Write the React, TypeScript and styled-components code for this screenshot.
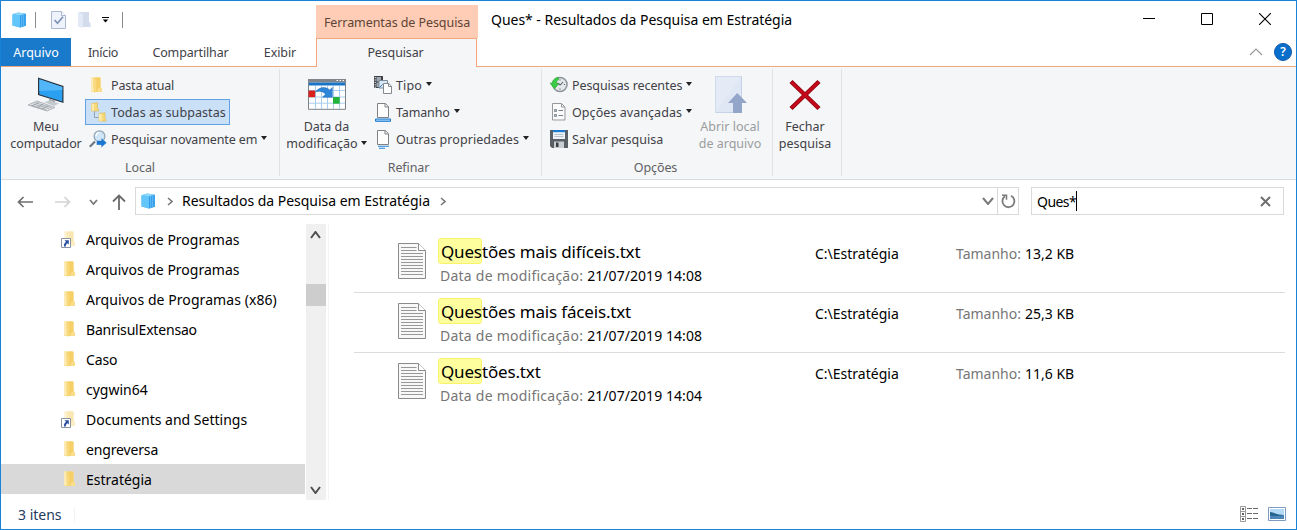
import React from 'react';
import styled, { createGlobalStyle, css } from 'styled-components';

const Global = createGlobalStyle`
  * { box-sizing: border-box; }
  body { margin: 0; background: #fff; font-family: "Noto Sans", "Open Sans", sans-serif; }
  svg { display: block; flex: none; }
`;

/* ---------- window frame and header ---------- */

const Window = styled.div`
  width: 1297px;
  height: 530px;
  border: 1px solid #1883d7;
  background: #fff;
  display: flex;
  flex-direction: column;
  overflow: hidden;
  color: #000;
  font-size: 14px;
  white-space: nowrap;
`;

const Header = styled.header`
  height: 66px;
  display: grid;
  grid-template-columns: 315px 162px 1fr;
  grid-template-rows: 37px 29px;
`;

const QuickAccess = styled.div`
  display: flex;
  align-items: center;
  padding: 1px 0 0 11px;
`;

const QuickDivider = styled.i<{ $left: number }>`
  width: 1px;
  height: 16px;
  margin-left: ${p => p.$left}px;
  background: #8c8c8c;
`;

const QuickButton = styled.span<{ $left: number }>`
  margin-left: ${p => p.$left}px;
`;

const ContextTitle = styled.div`
  margin-top: 4px;
  padding-top: 1px;
  background: #ffcdb5;
  color: #5d4437;
  display: flex;
  align-items: center;
  justify-content: center;
  font-size: 12.5px;
`;

const TitleBar = styled.div`
  display: flex;
  align-items: center;
  padding-left: 13px;
  padding-bottom: 1px;
  letter-spacing: -0.03px;
`;

const WindowControls = styled.div`
  margin-left: auto;
  display: flex;
  gap: 46px;
  padding-right: 25px;
`;

const Tabs = styled.nav`
  display: flex;
  border-bottom: 1px solid #f4a57a;
  font-size: 12.5px;
  color: #3f4147;
`;

const Tab = styled.a<{ $width: number; $file?: boolean }>`
  width: ${p => p.$width}px;
  display: flex;
  align-items: center;
  justify-content: center;
  ${p => p.$file && css`
    background: #1979ca;
    color: #fff;
  `}
`;

const ActiveTab = styled.a`
  border: solid #f4a57a;
  border-width: 1px 1px 0;
  margin-right: 1px;
  padding: 0 2px 2px 0;
  background: #f5f6f7;
  display: flex;
  align-items: center;
  justify-content: center;
  font-size: 12.5px;
  color: #3f4147;
`;

const TabsEnd = styled(Tabs)`
  margin-left: -1px;
  justify-content: flex-end;
  align-items: center;
  gap: 11px;
  padding-right: 4px;
`;

const HelpBadge = styled.span`
  width: 18px;
  height: 18px;
  border-radius: 50%;
  background: #0a6fcc;
  border: 1px solid #0b5aa8;
  color: #fff;
  font-size: 12px;
  font-weight: 600;
  line-height: 16px;
  text-align: center;
`;

/* ---------- ribbon ---------- */

const RibbonBar = styled.section`
  height: 113px;
  background: #f5f6f7;
  border-bottom: 1px solid #dadbdc;
  display: flex;
  color: #3f4147;
  font-size: 12.5px;
`;

const Group = styled.div<{ $width: number; $pad: number }>`
  width: ${p => p.$width}px;
  margin: 2px 0 3px;
  padding-left: ${p => p.$pad}px;
  border-right: 1px solid #e1e2e3;
  display: flex;
  flex-direction: column;
`;

const GroupBody = styled.div`
  display: flex;
  height: 92px;
`;

const GroupTitle = styled.div<{ $pad: number; $right?: number }>`
  margin-left: -${p => p.$pad}px;
  padding-right: ${p => p.$right ?? 0}px;
  text-align: center;
  line-height: 16px;
  letter-spacing: -0.1px;
  color: #606266;
`;

const BigButton = styled.div<{ $width: number; $disabled?: boolean }>`
  width: ${p => p.$width}px;
  display: flex;
  flex-direction: column;
  align-items: center;
  line-height: 17px;
  ${p => p.$disabled && css`color: #9a9ca0;`}
`;

const BigIcon = styled.div`
  height: 49px;
  padding-top: 2px;
  display: flex;
  align-items: center;
  justify-content: center;
`;

const BigLine = styled.div`
  display: flex;
  align-items: center;
  gap: 3px;
`;

const SmallColumn = styled.div<{ $width?: number }>`
  ${p => p.$width && css`width: ${p.$width}px;`}
  padding-top: 3px;
  display: flex;
  flex-direction: column;
  align-items: flex-start;
  gap: 1px;
`;

const SmallButton = styled.div<{ $selected?: boolean }>`
  height: 26px;
  padding: 0 3px;
  border: 1px solid ${p => (p.$selected ? '#62a2e4' : 'transparent')};
  background: ${p => (p.$selected ? '#c9e0f7' : 'transparent')};
  display: flex;
  align-items: center;
  gap: 4px;
`;

const Spaced = styled.span<{ $track?: number }>`
  letter-spacing: ${p => p.$track ?? 0}px;
`;

const Caret = styled.i`
  width: 0;
  height: 0;
  border: solid transparent;
  border-width: 4px 3.5px 0;
  border-top-color: #222;
  margin-bottom: 2px;
`;

/* ---------- address bar ---------- */

const AddressRow = styled.div`
  height: 44px;
  padding: 7px 12px 9px 15px;
  display: flex;
`;

const NavButtons = styled.div`
  width: 119px;
  display: flex;
  align-items: center;
  padding-top: 2px;
`;

const AddressBox = styled.div`
  width: 884px;
  border: 1px solid #d9d9d9;
  display: flex;
  align-items: center;
`;

const AddressText = styled.span`
  margin: 0 10px 0 9px;
  line-height: 26px;
  letter-spacing: -0.02px;
`;

const AddressEnd = styled.div`
  margin-left: auto;
  align-self: stretch;
  display: flex;
  align-items: center;
`;

const RefreshCell = styled.div`
  width: 21px;
  margin-left: 3px;
  align-self: stretch;
  border-left: 1px solid #d9d9d9;
  display: flex;
  align-items: center;
  justify-content: center;
`;

const SearchBox = styled.div`
  width: 253px;
  margin-left: 12px;
  padding: 0 12px 0 5px;
  border: 1px solid #d9d9d9;
  display: flex;
  align-items: center;
`;

const TextCursor = styled.i`
  width: 1px;
  height: 20px;
  background: #000;
`;

const ClearSlot = styled.span`
  margin-left: auto;
`;

/* ---------- main area ---------- */

const Main = styled.main`
  height: 276px;
  display: flex;
`;

const Tree = styled.ul`
  width: 304px;
  margin: 0;
  padding: 0;
  list-style: none;
`;

const TreeRow = styled.li<{ $selected?: boolean }>`
  height: 30px;
  padding-left: 59px;
  background: ${p => (p.$selected ? '#d9d9d9' : 'transparent')};
  display: flex;
  align-items: center;
  gap: 8px;
`;

const ScrollBar = styled.div`
  width: 20px;
  margin-left: 1px;
  background: #f0f0f0;
  display: flex;
  flex-direction: column;
  align-items: center;
`;

const ScrollArrow = styled.div`
  height: 21px;
  padding-right: 1px;
  display: flex;
  align-items: center;
`;

const ScrollThumb = styled.div`
  width: 20px;
  height: 22px;
  margin: 39px 0 auto;
  background: #cdcdcd;
`;

const Results = styled.div`
  flex: 1;
  margin-left: 2px;
  border-left: 1px solid #f4f4f4;
  padding: 9px 11px 0 25px;
`;

const ResultRow = styled.div`
  height: 60px;
  padding-left: 44px;
  border-bottom: 1px solid #dcdcdc;
  display: flex;
  &:last-child { border-bottom-color: transparent; }
`;

const FileIconSlot = styled.div`
  width: 40px;
  padding-top: 10px;
`;

const NameColumn = styled.div`
  width: 377px;
`;

const FileName = styled.div`
  height: 26px;
  margin-top: 5px;
  display: flex;
  font-size: 17px;
  line-height: 28px;
  letter-spacing: -0.17px;
`;

const Match = styled.mark`
  width: 44px;
  padding-left: 2px;
  border: 1px solid #f8f36a;
  border-radius: 3px;
  background: #fffe9f;
  color: #000;
  line-height: 26px;
`;

const Property = styled.div`
  margin-left: 2px;
  line-height: 24px;
  display: flex;
  gap: 4px;
`;

const Muted = styled.span<{ $track?: number }>`
  color: #767676;
  letter-spacing: ${p => p.$track ?? 0}px;
`;

const Location = styled.div`
  width: 141px;
  line-height: 41px;
`;

const FileSize = styled.div`
  line-height: 41px;
  display: flex;
  gap: 4px;
`;

const StatusBar = styled.footer`
  flex: 1;
  display: flex;
  align-items: center;
  padding: 0 10px 1px 17px;
  color: #223a5e;
`;

const StatusDivider = styled.i`
  width: 1px;
  height: 15px;
  margin-left: 12px;
  background: #f3f3f3;
`;

const ViewModes = styled.div`
  margin-left: auto;
  display: flex;
  align-items: center;
  gap: 10px;
`;

/* ---------- icons ---------- */

const SearchFolderIcon = () => (
  <svg width="15" height="16" viewBox="0 0 15 16">
    <path d="M.5 2.200 6 .5 13.800 1.800v12L8 15.600.5 13.500z" fill="#4db8f6" />
    <path d="M.5 2.200 6 .5l7.800 1.300L8 3.500z" fill="#8fd6fb" />
    <path d="M.5 2.200 8 3.500v12.100L.5 13.500z" fill="#62c6fa" />
    <path d="M8 3.500l5.800-1.700v12L8 15.600z" fill="#2f9dec" />
    <path d="M9.700 3v12.100M11.700 2.400v12.100" stroke="#8fd0f8" strokeWidth=".6" />
  </svg>
);

const CheckPageIcon = () => (
  <svg width="15" height="18" viewBox="0 0 15 18">
    <path d="M.5.5h10l4 4v13H.5z" fill="#eef3fb" stroke="#adb9d2" />
    <path d="M10.5.5v4h4" fill="#fff" stroke="#adb9d2" />
    <path d="m3.5 9 3 3.2 5.500-6.400" fill="none" stroke="#7f92ba" strokeWidth="1.7" />
  </svg>
);

const PaleFolderIcon = () => (
  <svg width="13" height="16" viewBox="0 0 13 16">
    <path d="M1 0h10v10l1.500 1v4H1z" fill="#d3dcec" />
    <path d="M0 .5 5 2v14l-5-1.500z" fill="#e4eaf5" />
  </svg>
);

const QuickMenuIcon = () => (
  <svg width="7" height="6" viewBox="0 0 7 6">
    <path d="M0 .5h7" stroke="#000" />
    <path d="M.8 2.600h5.400L3.500 5.600z" fill="#000" />
  </svg>
);

const FolderShape = () => (
  <>
    <path d="M2 1.500h9.700v9.300l1.300 1.200v4H2z" fill="#f9dd8c" />
    <path d="M2 1.200 5 2v13l-3 .6z" fill="#fceab5" />
    <path d="M4.500 1.800 9.300 1.200l2 .6v9.500L8.600 13v2.600L5 16.600z" fill="#f6cf66" />
    <path d="M4.500 2.200 7.200 3v12.800L5 16.600z" fill="#f9d97c" />
  </>
);

const FolderIcon = () => (
  <svg width="18" height="18" viewBox="0 0 18 18"><FolderShape /></svg>
);

const TreeFolderIcon = ({ shortcut }: { shortcut?: boolean }) => (
  <svg width="18" height="18" viewBox="0 0 18 18">
    <g transform="translate(2 0)" opacity={shortcut ? 0.5 : 1}><FolderShape /></g>
    {shortcut && (
      <>
        <path d="M1.500 8.500h9v9h-9z" fill="#fff" stroke="#8a93a3" />
        <path d="M4.500 10.300h4.300v4.300L7.400 13.200c-1.200.9-1.600 2-1.600 3.200H4c-.3-2 .5-3.500 2-4.600z" fill="#2a4f9e" />
      </>
    )}
  </svg>
);

const SubfoldersIcon = () => (
  <svg width="18" height="20" viewBox="0 0 18 20">
    <path d="M5.500 9v6.500h4" fill="none" stroke="#98a2ad" />
    <path d="M2.500 1.500 8.500.8v5.600l1 .8V9h-7z" fill="#f8d978" stroke="#d9b54c" strokeWidth=".6" />
    <path d="M2.500 1.500 5.200 2.200v7L2.500 8.600z" fill="#fdeaa9" />
    <path d="M10 11.500 16 10.800v5.600l1 .8V19h-7z" fill="#f8d978" stroke="#d9b54c" strokeWidth=".6" />
    <path d="M10 11.500 12.700 12.200v7L10 18.600z" fill="#fdeaa9" />
  </svg>
);

const SearchAgainIcon = () => (
  <svg width="18" height="18" viewBox="0 0 18 18">
    <path d="M.8 16.800 6 11.500" stroke="#6c7884" strokeWidth="2.200" />
    <circle cx="10.500" cy="6.300" r="5.400" fill="#cfe6f8" stroke="#8fa3b5" strokeWidth="1.200" />
    <path d="M7 6a3.600 3.600 0 0 1 3.500-3.400" fill="none" stroke="#fff" strokeWidth="1.300" />
    <path d="M7.500 10.500h4.700V7.800l5.600 5-5.600 5v-2.700H7.500z" fill="#1b77cf" stroke="#f5f6f7" strokeWidth=".4" />
  </svg>
);

const ComputerIcon = () => (
  <svg width="38" height="36" viewBox="0 0 38 36">
    <path d="M11 .5 36.500 9v17L11 18z" fill="#2c343d" />
    <path d="M12.300 2.200 35.300 10v14.400L12.300 17.200z" fill="#2ba0f0" />
    <path d="M12.300 2.200 35.300 10v3L12.300 14z" fill="#53b6f8" />
    <path d="m22 21.500 6 2v4l-6-2z" fill="#a4abb2" />
    <path d="m17 25 6-1.500 9 3-5 2.600z" fill="#c4c9ce" />
    <path d="M1 28 10 24l18 6.500-8 3.500z" fill="#dfe2e5" stroke="#98a0a7" strokeWidth=".7" />
    <path d="m4 28.300 15 4.400M6.500 27l15.500 4.700M8.700 25.800l16 5M5 29l7-4M10 30.500l6.500-3.500M15 32l6.500-3.500" stroke="#8a9299" strokeWidth=".6" />
  </svg>
);

const CalendarIcon = () => (
  <svg width="38" height="31" viewBox="0 0 38 31">
    <path d="M.5.500h37v29.800H.5z" fill="#fff" stroke="#7c8187" />
    <path d="M0 0h38v3.500H0z" fill="#7f858b" />
    <path d="M28.500 1.500h1.500M31.500 1.500H33M34.500 1.500H36" stroke="#fff" />
    <path d="M1 3.500h36v3H1z" fill="#1a74c8" />
    <path d="M7.500 7v23M13.500 7v23M19.500 7v23M25.500 7v23M31.500 7v23M1 11.500h36M1 18h36M1 24.200h36" stroke="#a9cdee" />
    <path d="M.5 11.500h6.700v6.700H.5z" fill="#d9201b" />
    <path d="M25 18h6.700v6.700H25z" fill="#22b43a" />
    <path d="M7.500 12.800C12 7.500 18 7.400 21.700 11l2.600-2.600v9.800h-9.800l3-3c-3-3.300-6-3.300-10-2.400z" fill="#2e86d8" stroke="#1663b0" strokeWidth=".5" />
  </svg>
);

const TypeIcon = () => (
  <svg width="18" height="18" viewBox="0 0 18 18">
    <path d="M0 0h9v12H0z" fill="#3f4348" />
    <path d="M2.500 1h4.500v4.500H2.500zM2.500 6.500h4.500v4.500H2.500z" fill="#9fa8b2" />
    <path d="M1.200 1v11" stroke="#fff" strokeWidth="1" strokeDasharray="1.200 1.200" />
    <path d="M5 4.500h8.500v7.500H5z" fill="#d7e8f7" stroke="#7b8b9a" />
    <path d="m5.500 11.500 3-3 2 2 2-2" fill="none" stroke="#3c7fc0" />
    <path d="M9.500 7.500h5.300l2.700 2.700v7.300h-8z" fill="#fff" stroke="#86898d" />
    <path d="M14.500 7.500v3h3" fill="none" stroke="#86898d" />
  </svg>
);

const SizeIcon = () => (
  <svg width="18" height="20" viewBox="0 0 18 20">
    <path d="M3.500 1.500h7.800l3.200 3.200v10.800h-11z" fill="#fdfdfd" stroke="#7f8184" />
    <path d="M11 1.500v3.500h3.500" fill="none" stroke="#7f8184" />
    <path d="M1.500 17h15v2.300h-15z" fill="#9ccdf5" stroke="#1b78d0" />
  </svg>
);

const PropertiesIcon = () => (
  <svg width="18" height="20" viewBox="0 0 18 20">
    <path d="M3.500 1.500h7.800l3.200 3.200v10.800h-11z" fill="#fdfdfd" stroke="#7f8184" />
    <path d="M11 1.500v3.500h3.500" fill="none" stroke="#7f8184" />
    <path d="M4 17.300h11M5 19.300h6" stroke="#2482d8" strokeWidth="1.100" />
  </svg>
);

const RecentIcon = () => (
  <svg width="18" height="18" viewBox="0 0 18 18">
    <circle cx="10" cy="8.500" r="7" fill="#e3e7ea" stroke="#8d959b" strokeWidth="1.600" />
    <path d="M10 3.500v1M10 12.500v1M14 8.500h1M10.300 9 13 6M10.300 9 7.500 7" stroke="#5a6268" strokeWidth="1.100" />
    <path d="M8.500 1.300C4.300 2 2.500 4.500 2.300 7H0l4.400 6L9 7.500H6.500c0-2 .7-3 2.200-3.900z" fill="#3bcb45" stroke="#259a30" strokeWidth=".5" />
  </svg>
);

const OptionsIcon = () => (
  <svg width="18" height="18" viewBox="0 0 18 18">
    <path d="M2.500.500h9l3.500 3.500v13H2.500z" fill="#fbfbfb" stroke="#97999c" />
    <path d="M11.500.500V4H15" fill="none" stroke="#97999c" />
    <path d="M4.500 6.500h2v2h-2zM4.500 11.500h2v2h-2z" fill="#b9c2cc" stroke="#6f7a86" strokeWidth=".8" />
    <path d="M8.500 7.500H13M8.500 12.500H13" stroke="#7a8088" />
  </svg>
);

const SaveIcon = () => (
  <svg width="18" height="18" viewBox="0 0 18 18">
    <path d="M0 0h18v18H2l-2-2z" fill="#5a5f65" />
    <path d="M3 0h12v9H3z" fill="#eef2f6" />
    <path d="M3 0h12v2.200H3z" fill="#1c7bd0" />
    <path d="M4.500 4.500h9M4.500 6.500h9" stroke="#b4c2cf" />
    <path d="M4 11.500h10V18H4z" fill="#c9ced3" />
    <path d="M6 12.500h2.500V17H6z" fill="#3a3f44" />
  </svg>
);

const OpenLocationIcon = () => (
  <svg width="34" height="38" viewBox="0 0 34 38">
    <path d="M2.500.500h26v36h-26z" fill="#dfe7f4" stroke="#c5d2e8" />
    <path d="M2.500 36.500v-36h26z" fill="#e7eef8" opacity=".6" />
    <path d="M24.300 17 34 27h-5v10h-9V27h-5z" fill="#93a5c8" />
  </svg>
);

const CloseSearchIcon = () => (
  <svg width="32" height="32" viewBox="0 0 32 32">
    <path d="m2 2.500 28 27M30 2.500l-28 27" stroke="#8d0310" strokeWidth="4.400" />
    <path d="m2.500 3 27 26M29.500 3l-27 26" stroke="#c40a1a" strokeWidth="2.800" />
  </svg>
);

const TextFileIcon = () => (
  <svg width="28" height="36" viewBox="0 0 28 36">
    <path d="M.5.500h20l7 7v28H.5z" fill="#f8f8f8" stroke="#8b8b8b" />
    <path d="M20.500.500v7h7" fill="#fff" stroke="#8b8b8b" />
    <path
      d="M3 4.500H18.500M3 7.500H18.500M3 10.500h22M3 13.500h22M3 16.500h22M3 19.500h22M3 22.500h22M3 25.500h22M3 28.500h22M3 31.500h22"
      stroke="#989898"
    />
  </svg>
);

type ChevronProps = { w: number; h: number; color: string; dir: 'up' | 'down' | 'right'; weight?: number };
const Chevron = ({ w, h, color, dir, weight = 1.6 }: ChevronProps) => {
  const d = {
    up: `M1 ${h - 1} ${w / 2} 1 ${w - 1} ${h - 1}`,
    down: `M1 1 ${w / 2} ${h - 1} ${w - 1} 1`,
    right: `M1 1 ${w - 1} ${h / 2} 1 ${h - 1}`,
  }[dir];
  return (
    <svg width={w} height={h} viewBox={`0 0 ${w} ${h}`}>
      <path d={d} fill="none" stroke={color} strokeWidth={weight} />
    </svg>
  );
};

const NavSlot = styled.span<{ $left: number }>`
  margin-left: ${p => p.$left}px;
`;

const BackIcon = ({ color, flip }: { color: string; flip?: boolean }) => (
  <svg width="16" height="12" viewBox="0 0 16 12">
    <path
      d={flip ? 'M0 6h15M9.500 1l5 5-5 5' : 'M16 6H1.500M6.500 1l-5 5 5 5'}
      fill="none" stroke={color} strokeWidth="1.700"
    />
  </svg>
);

const UpIcon = () => (
  <svg width="14" height="16" viewBox="0 0 14 16">
    <path d="M7 16V1.500M1 7.500l6-6 6 6" fill="none" stroke="#6a6a6a" strokeWidth="1.800" />
  </svg>
);

const RefreshIcon = () => (
  <svg width="15" height="15" viewBox="0 0 15 15">
    <path d="M10 1.800A6 6 0 1 1 4 2.300" fill="none" stroke="#7a7a7a" strokeWidth="1.800" />
    <path d="M1 1.300h4.500v4.500" fill="none" stroke="#7a7a7a" strokeWidth="1.500" />
  </svg>
);

const ClearIcon = () => (
  <svg width="11" height="11" viewBox="0 0 11 11">
    <path d="m1 1 9 9M10 1l-9 9" stroke="#6e6e6e" strokeWidth="2" />
  </svg>
);

const MinimizeIcon = () => (
  <svg width="12" height="12" viewBox="0 0 12 12"><path d="M0 5.500h12" stroke="#000" /></svg>
);
const MaximizeIcon = () => (
  <svg width="12" height="12" viewBox="0 0 12 12"><path d="M.5.500h11v11H.5z" fill="none" stroke="#000" /></svg>
);
const CloseIcon = () => (
  <svg width="12" height="12" viewBox="0 0 12 12"><path d="m0 0 12 12M12 0 0 12" stroke="#000" strokeWidth="1.100" /></svg>
);

const DetailsViewIcon = () => (
  <svg width="18" height="16" viewBox="0 0 18 16">
    <path d="M.5.500h5v15h-5zM.5 5.500h5M.5 10.500h5" fill="#fff" stroke="#9a9a9a" />
    <path d="M2 3h2M2 8h2M2 13h2" stroke="#333" strokeWidth="1.500" />
    <path d="M7 2.500h11M7 7.500h11M7 12.500h11" stroke="#6a6a6a" strokeDasharray="5 1" />
  </svg>
);

const ThumbViewIcon = () => (
  <svg width="18" height="14" viewBox="0 0 18 14">
    <path d="M.5.500h17v13H.5z" fill="#fff" stroke="#7d9cc4" />
    <path d="M2 2h14v10H2z" fill="#b5daf6" />
    <path d="M2 5c4 0 6 3 14 3v1H2z" fill="#27648f" />
    <path d="M2 8.500c5 1 9 .5 14-.5v4H2z" fill="#4c86b8" />
  </svg>
);

/* ---------- data ---------- */

const folders = [
  { name: 'Arquivos de Programas', shortcut: true },
  { name: 'Arquivos de Programas' },
  { name: 'Arquivos de Programas (x86)', track: 0.07 },
  { name: 'BanrisulExtensao', track: -0.18 },
  { name: 'Caso', track: -0.1 },
  { name: 'cygwin64' },
  { name: 'Documents and Settings', shortcut: true },
  { name: 'engreversa', track: -0.15 },
  { name: 'Estratégia', selected: true },
];

const files = [
  { rest: 'tões mais difíceis.txt', date: '21/07/2019 14:08', size: '13,2 KB' },
  { rest: 'tões mais fáceis.txt', date: '21/07/2019 14:08', size: '25,3 KB' },
  { rest: 'tões.txt', date: '21/07/2019 14:04', size: '11,6 KB' },
];

type RibbonItemProps = { icon: React.ReactNode; label: string; track?: number; menu?: boolean; selected?: boolean };
const RibbonItem = ({ icon, label, track, menu, selected }: RibbonItemProps) => (
  <SmallButton $selected={selected}>
    {icon}
    <Spaced $track={track}>{label}</Spaced>
    {menu && <Caret />}
  </SmallButton>
);

export default function App() {
  return (
    <>
      <Global />
      <Window>
        <Header>
          <QuickAccess>
            <SearchFolderIcon />
            <QuickDivider $left={8} />
            <QuickButton $left={15}><CheckPageIcon /></QuickButton>
            <QuickButton $left={12}><PaleFolderIcon /></QuickButton>
            <QuickButton $left={11}><QuickMenuIcon /></QuickButton>
            <QuickDivider $left={13} />
          </QuickAccess>
          <ContextTitle><Spaced $track={-0.08}>Ferramentas de Pesquisa</Spaced></ContextTitle>
          <TitleBar>
            Ques* - Resultados da Pesquisa em Estratégia
            <WindowControls>
              <MinimizeIcon />
              <MaximizeIcon />
              <CloseIcon />
            </WindowControls>
          </TitleBar>
          <Tabs>
            <Tab $width={70} $file>Arquivo</Tab>
            <Tab $width={64}><Spaced $track={-0.3}>Início</Spaced></Tab>
            <Tab $width={111}><Spaced $track={-0.15}>Compartilhar</Spaced></Tab>
            <Tab $width={68}><Spaced $track={-0.1}>Exibir</Spaced></Tab>
          </Tabs>
          <ActiveTab><Spaced $track={-0.13}>Pesquisar</Spaced></ActiveTab>
          <TabsEnd>
            <Chevron w={14} h={8} color="#999" dir="up" weight={1.2} />
            <HelpBadge>?</HelpBadge>
          </TabsEnd>
        </Header>

        <RibbonBar>
          <Group $width={279} $pad={6}>
            <GroupBody>
              <BigButton $width={78}>
                <BigIcon><ComputerIcon /></BigIcon>
                <BigLine>Meu</BigLine>
                <BigLine><Spaced $track={-0.13}>computador</Spaced></BigLine>
              </BigButton>
              <SmallColumn>
                <RibbonItem icon={<FolderIcon />} label="Pasta atual" track={-0.15} />
                <RibbonItem icon={<SubfoldersIcon />} label="Todas as subpastas" track={0.08} selected />
                <RibbonItem icon={<SearchAgainIcon />} label="Pesquisar novamente em" track={-0.13} menu />
              </SmallColumn>
            </GroupBody>
            <GroupTitle $pad={6}>Local</GroupTitle>
          </Group>

          <Group $width={262} $pad={3}>
            <GroupBody>
              <BigButton $width={87}>
                <BigIcon><CalendarIcon /></BigIcon>
                <BigLine>Data da</BigLine>
                <BigLine>modificação<Caret /></BigLine>
              </BigButton>
              <SmallColumn>
                <RibbonItem icon={<TypeIcon />} label="Tipo" track={0.1} menu />
                <RibbonItem icon={<SizeIcon />} label="Tamanho" track={-0.15} menu />
                <RibbonItem icon={<PropertiesIcon />} label="Outras propriedades" track={0.06} menu />
              </SmallColumn>
            </GroupBody>
            <GroupTitle $pad={3} $right={4}>Refinar</GroupTitle>
          </Group>

          <Group $width={231} $pad={4}>
            <GroupBody>
              <SmallColumn $width={144}>
                <RibbonItem icon={<RecentIcon />} label="Pesquisas recentes" track={-0.08} menu />
                <RibbonItem icon={<OptionsIcon />} label="Opções avançadas" track={0.06} menu />
                <RibbonItem icon={<SaveIcon />} label="Salvar pesquisa" />
              </SmallColumn>
              <BigButton $width={80} $disabled>
                <BigIcon><OpenLocationIcon /></BigIcon>
                <BigLine>Abrir local</BigLine>
                <BigLine>de arquivo</BigLine>
              </BigButton>
            </GroupBody>
            <GroupTitle $pad={4} $right={3}>Opções</GroupTitle>
          </Group>

          <Group $width={69} $pad={0}>
            <GroupBody>
              <BigButton $width={64}>
                <BigIcon><CloseSearchIcon /></BigIcon>
                <BigLine>Fechar</BigLine>
                <BigLine>pesquisa</BigLine>
              </BigButton>
            </GroupBody>
          </Group>
        </RibbonBar>

        <AddressRow>
          <NavButtons>
            <NavSlot $left={1}><BackIcon color="#6f6f6f" /></NavSlot>
            <NavSlot $left={22}><BackIcon color="#d3d3d3" flip /></NavSlot>
            <NavSlot $left={18}><Chevron w={9} h={6} color="#7a7a7a" dir="down" weight={1.8} /></NavSlot>
            <NavSlot $left={14}><UpIcon /></NavSlot>
          </NavButtons>
          <AddressBox>
            <NavSlot $left={5}><SearchFolderIcon /></NavSlot>
            <NavSlot $left={11}><Chevron w={6} h={9} color="#777" dir="right" /></NavSlot>
            <AddressText>Resultados da Pesquisa em Estratégia</AddressText>
            <Chevron w={6} h={9} color="#777" dir="right" />
            <AddressEnd>
              <Chevron w={12} h={8} color="#7a7a7a" dir="down" weight={2} />
              <RefreshCell><RefreshIcon /></RefreshCell>
            </AddressEnd>
          </AddressBox>
          <SearchBox>
            <Spaced $track={-0.55}>Ques*</Spaced>
            <TextCursor />
            <ClearSlot><ClearIcon /></ClearSlot>
          </SearchBox>
        </AddressRow>

        <Main>
          <Tree>
            {folders.map((f, i) => (
              <TreeRow key={i} $selected={f.selected}>
                <TreeFolderIcon shortcut={f.shortcut} />
                <Spaced $track={f.track}>{f.name}</Spaced>
              </TreeRow>
            ))}
          </Tree>
          <ScrollBar>
            <ScrollArrow><Chevron w={11} h={8} color="#505050" dir="up" weight={2} /></ScrollArrow>
            <ScrollThumb />
            <ScrollArrow><Chevron w={11} h={8} color="#505050" dir="down" weight={2} /></ScrollArrow>
          </ScrollBar>
          <Results>
            {files.map(f => (
              <ResultRow key={f.rest}>
                <FileIconSlot><TextFileIcon /></FileIconSlot>
                <NameColumn>
                  <FileName><Match>Ques</Match>{f.rest}</FileName>
                  <Property>
                    <Muted $track={0.24}>Data de modificação:</Muted>
                    <Spaced $track={0.06}>{f.date}</Spaced>
                  </Property>
                </NameColumn>
                <Location>C:\Estratégia</Location>
                <FileSize><Muted>Tamanho:</Muted>{f.size}</FileSize>
              </ResultRow>
            ))}
          </Results>
        </Main>

        <StatusBar>
          3 itens
          <StatusDivider />
          <ViewModes>
            <DetailsViewIcon />
            <ThumbViewIcon />
          </ViewModes>
        </StatusBar>
      </Window>
    </>
  );
}
